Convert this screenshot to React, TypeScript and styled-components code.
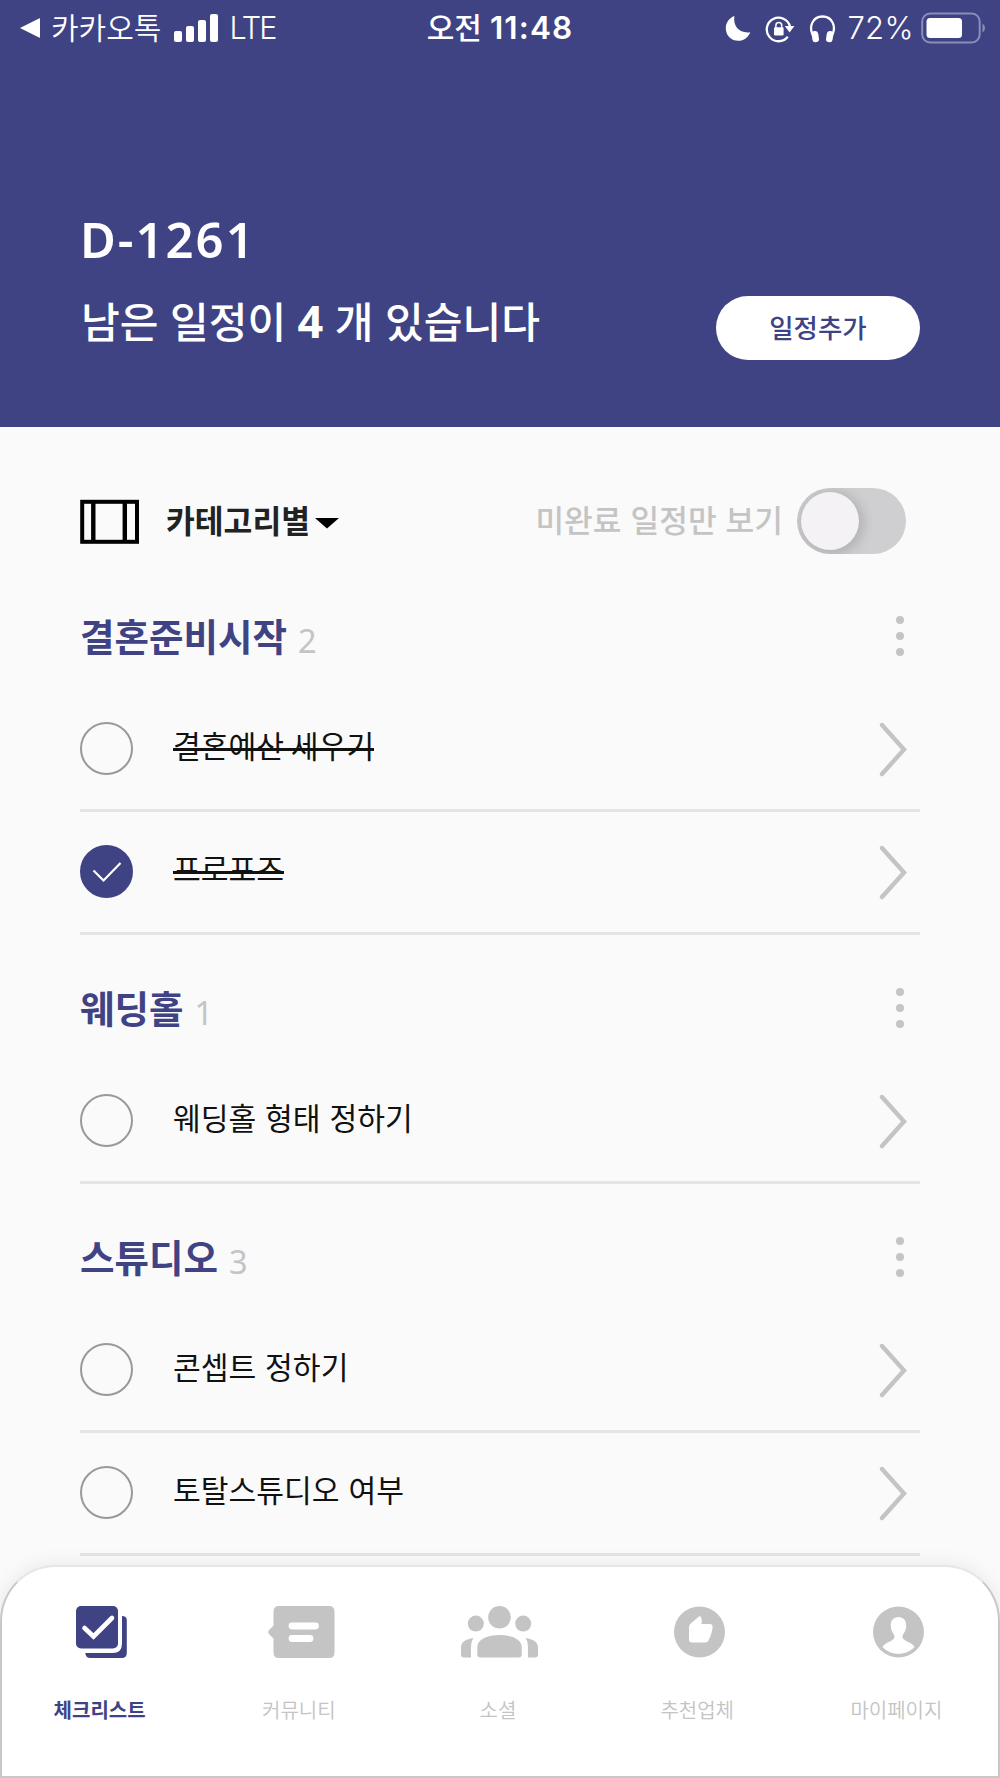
import React, { useState } from 'react';
import styled, { createGlobalStyle } from 'styled-components';

const navy = '#3f4384';
const grey = '#c4c4c4';

const GlobalStyle = createGlobalStyle`
  * { box-sizing: border-box; }
  body { margin: 0; background: #fafafa; }
  button { border: 0; padding: 0; background: none; font: inherit; color: inherit; cursor: pointer; }
  h1, h2, p { margin: 0; }
  svg { display: block; flex: none; }
`;

const Screen = styled.div`
  width: 1000px;
  height: 1778px;
  display: flex;
  flex-direction: column;
  overflow: hidden;
  background: #fafafa;
  color: #111;
  font-family: 'Noto Sans CJK KR', sans-serif;
`;

const Header = styled.header`
  height: 427px;
  flex: none;
  background: ${navy};
  color: #fff;
`;

const StatusBar = styled.div`
  height: 54px;
  padding: 0 14px 0 19px;
  display: grid;
  grid-template-columns: 1fr auto 1fr;
  align-items: center;
`;

const StatusGroup = styled.div<{ $end?: boolean }>`
  display: flex;
  align-items: center;
  justify-content: ${p => (p.$end ? 'flex-end' : 'flex-start')};
`;

const StatusIcons = styled.div`
  display: flex;
  align-items: center;
  gap: 14px;
  margin: 1px 11px 0 0;
`;

const Carrier = styled.span`
  margin: 0 13px 3px 10px;
  font-size: 30px;
  line-height: 51px;
  font-weight: 350;
`;

const Network = styled.span`
  margin-left: 10px;
  font-family: Inter, sans-serif;
  font-size: 30.5px;
  font-weight: 300;
  line-height: 54px;
  letter-spacing: -1.9px;
`;

const BatteryLevel = styled.span`
  margin-right: 7px;
  font-family: Inter, sans-serif;
  font-size: 31px;
  font-weight: 300;
  line-height: 54px;
  letter-spacing: 0.4px;
`;

const Clock = styled.span`
  display: flex;
  align-items: center;
  gap: 8px;
  font-size: 30px;
  font-weight: 500;
  line-height: 51px;
  padding: 0 5px 3px 0;
  b {
    padding-top: 2px;
    font-family: Inter, sans-serif;
    font-weight: 600;
    font-size: 31.5px;
    letter-spacing: 1.1px;
  }
`;

const Summary = styled.div`
  padding: 148px 80px 0 81px;
  display: flex;
  justify-content: space-between;
`;

const DDay = styled.h1`
  margin-left: -1px;
  padding-top: 2px;
  font-family: 'Noto Sans', sans-serif;
  font-size: 49px;
  font-weight: 600;
  line-height: 70px;
  letter-spacing: 2px;
`;

const Remaining = styled.p`
  margin-top: 14px;
  font-size: 42.1px;
  font-weight: 500;
  line-height: 64px;
  word-spacing: 2px;
  b {
    font-family: 'Noto Sans', sans-serif;
    font-size: 45px;
    font-weight: 700;
    line-height: 1;
  }
`;

const AddButton = styled.button`
  margin-top: 94px;
  width: 204px;
  height: 64px;
  padding-bottom: 2px;
  border-radius: 32px;
  background: #fff;
  color: ${navy};
  font-size: 26.5px;
  font-weight: 500;
  line-height: 62px;
`;

const List = styled.main`
  flex: 1;
  min-height: 0;
  padding: 0 80px;
`;

const Toolbar = styled.div`
  height: 136px;
  padding: 53px 14px 1px 0;
  display: flex;
  align-items: center;
`;

const SortButton = styled.button`
  margin-left: 26px;
  display: flex;
  align-items: center;
  gap: 5px;
  font-size: 31.3px;
  font-weight: 700;
  line-height: 42px;
  color: #222;
  span { padding-bottom: 2px; }
  svg { margin-top: 3px; }
`;

const FilterLabel = styled.span`
  margin: 0 14px 4px auto;
  font-size: 31.2px;
  font-weight: 500;
  line-height: 44px;
  color: ${grey};
  word-spacing: 2px;
`;

const Switch = styled.button<{ $on: boolean }>`
  width: 109px;
  height: 66px;
  padding: 4px;
  display: flex;
  align-items: center;
  justify-content: ${p => (p.$on ? 'flex-end' : 'flex-start')};
  border-radius: 33px;
  overflow: hidden;
  background: ${p => (p.$on ? navy : '#cfcfd2')};
`;

const Knob = styled.span`
  width: 58px;
  height: 58px;
  border-radius: 50%;
  background: #f4f2f4;
  box-shadow: 2px 2px 12px 3px rgba(0, 0, 0, 0.14);
`;

const SectionHead = styled.div`
  height: 126px;
  padding: 20px 16px 0 0;
  display: flex;
  align-items: center;
`;

const SectionTitle = styled.h2`
  margin-bottom: 2px;
  font-size: 37.5px;
  font-weight: 700;
  line-height: 54px;
  color: ${navy};
`;

const Count = styled.span`
  margin: 10px 0 0 11px;
  flex: 1;
  font-family: 'Noto Sans', sans-serif;
  font-size: 32.5px;
  line-height: 48px;
  color: ${grey};
`;

const Kebab = styled.button`
  display: flex;
  flex-direction: column;
  gap: 8px;
  i { width: 8px; height: 8px; border-radius: 50%; background: ${grey}; }
`;

const TaskRow = styled.div`
  height: 123px;
  padding: 0 13px 1px 0;
  display: flex;
  align-items: center;
  border-bottom: 3px solid #e4e4e4;
`;

const Check = styled.button<{ $on: boolean }>`
  width: 53px;
  height: 53px;
  display: flex;
  align-items: center;
  justify-content: center;
  border-radius: 50%;
  border: 2px solid ${p => (p.$on ? navy : '#999')};
  background: ${p => (p.$on ? navy : 'transparent')};
`;

const TaskName = styled.span<{ $struck: boolean }>`
  position: relative;
  margin: 0 auto 7px 40px;
  font-size: 30.2px;
  line-height: 44px;
  word-spacing: ${p => (p.$struck ? '0' : '2px')};
  &::after {
    content: '';
    display: ${p => (p.$struck ? 'block' : 'none')};
    position: absolute;
    left: 0;
    right: 0;
    top: 25px;
    height: 3px;
    background: #111;
  }
`;

const TabBar = styled.nav`
  height: 213px;
  flex: none;
  display: grid;
  grid-template-columns: repeat(5, 1fr);
  border: 2px solid #c8c8c8;
  border-top-color: #e6e6e6;
  border-radius: 56px 56px 0 0;
  background: #fff;
  box-shadow: 0 0 20px rgba(0, 0, 0, 0.08);
`;

const Tab = styled.button<{ $active: boolean }>`
  display: flex;
  flex-direction: column;
  align-items: center;
  gap: 37px;
  padding-top: 39px;
  color: ${p => (p.$active ? navy : grey)};
  font-size: 20px;
  font-weight: ${p => (p.$active ? 700 : 350)};
  line-height: 30px;
  span { margin-right: 4px; }
`;

const MoonIcon = () => (
  <svg width="26" height="27" viewBox="0 0 26 27" fill="#fff">
    <path d="M9.4 1C7.8 11.8 14.8 18.6 25.2 17.2C23.2 22.5 18.8 25.8 13.4 25.8C6.2 25.8.8 20.4.8 13.2C.8 7.6 4.2 3 9.4 1Z" />
  </svg>
);

const RotationLockIcon = () => (
  <svg width="30" height="28" viewBox="0 0 30 28" fill="none" stroke="#fff">
    <path d="M25 11.500A11.800 11.800 0 1 0 22.800 21.800" strokeWidth="2.300" />
    <path d="M19.800 11H29.400L24.600 17.600Z" fill="#fff" stroke="none" />
    <rect x="9" y="12.200" width="9.600" height="8.200" rx="1.200" fill="#fff" stroke="none" />
    <path d="M10.900 13V10.500a2.900 2.900 0 0 1 5.800 0V13" strokeWidth="1.500" />
  </svg>
);

const HeadphonesIcon = () => (
  <svg width="27" height="28" viewBox="0 0 27 28">
    <path d="M4.200 21C-.8 12 3.500 1.500 13.500 1.500S27.800 12 22.800 21" fill="none" stroke="#fff" strokeWidth="2.300" />
    <rect x="3" y="16" width="6.600" height="11.200" rx="3" transform="rotate(-9 6.300 21.600)" fill="#fff" />
    <rect x="17.400" y="16" width="6.600" height="11.200" rx="3" transform="rotate(9 20.700 21.600)" fill="#fff" />
  </svg>
);

const BatteryIcon = () => (
  <svg width="65" height="32" viewBox="0 0 65 32">
    <rect x="1.200" y="1.500" width="57.500" height="29" rx="8" fill="none" stroke="#8b8eb8" strokeWidth="2" />
    <rect x="5.500" y="6" width="35.500" height="20" rx="3.500" fill="#fff" />
    <path d="M61.500 11.500Q64 13 64 16T61.500 20.500Z" fill="#8b8eb8" />
  </svg>
);

const ViewIcon = () => (
  <svg width="60" height="46" viewBox="0 0 60 46" fill="none" stroke="#000">
    <rect x="2.200" y="3.800" width="54.800" height="40" strokeWidth="4" />
    <path d="M13.300 3V44M44.800 3V44" strokeWidth="4.400" />
  </svg>
);

const Chevron = () => (
  <svg width="28" height="56" viewBox="0 0 28 56" fill="none" stroke={grey} strokeWidth="4.400" strokeLinecap="round">
    <path d="M3 4L25 28.500L3 53" />
  </svg>
);

const ChecklistIcon = () => (
  <svg width="52" height="52" viewBox="0 0 52 52">
    <rect x="0" y="0" width="42" height="42.500" rx="5" fill={navy} />
    <path d="M8.500 22L17.500 30.500L36 12" fill="none" stroke="#fff" strokeWidth="4.600" strokeLinecap="round" />
    <path d="M46 10C49 10 50.800 11.500 50.800 14V47Q50.800 52 45.800 52H14.500Q9.500 52 9.300 47H36.500Q46 47 46 37.500Z" fill={navy} />
  </svg>
);

const CommunityIcon = () => (
  <svg width="69" height="52" viewBox="-2 0 69 52">
    <path d="M11 0H61Q66.500 0 66.500 5.500V46.500Q66.500 52 61 52H11Q5.500 52 5.500 46.500V32.500L1 28Q-.8 26 1 24L5.500 19.500V5.500Q5.500 0 11 0Z" fill={grey} />
    <path d="M24 20H47.500M24 32.500H42" stroke="#fff" strokeWidth="6.800" strokeLinecap="round" />
  </svg>
);

const SocialIcon = () => (
  <svg width="77" height="52" viewBox="0 0 77 52" fill={grey}>
    <circle cx="38.500" cy="11.300" r="11.300" />
    <circle cx="14.800" cy="17.600" r="8" />
    <circle cx="62.200" cy="17.600" r="8" />
    <path d="M16.300 41C16.300 33 27 29 38.500 29S60.700 33 60.700 41V48.500Q60.700 51.500 57.700 51.500H19.300Q16.300 51.500 16.300 48.500Z" />
    <path d="M12.500 32C9.800 36 10 38.500 10 51.500H3Q0 51.500 0 48.500V41.500C0 36 5 33 12.500 32Z" />
    <path d="M64.500 32C67.200 36 67 38.500 67 51.500H74Q77 51.500 77 48.500V41.500C77 36 72 33 64.500 32Z" />
  </svg>
);

const RecommendIcon = () => (
  <svg width="51" height="52" viewBox="0 0 51 52">
    <circle cx="25.500" cy="26" r="25.500" fill={grey} />
    <path d="M25.500 10Q28.700 11.300 27.500 18H36Q39 18 38.500 22Q38 27.500 34.500 34.500Q33.600 36.500 31.500 36.500H18Q15 36.500 15 33.500V21Q15 19 16.500 17.700Z" fill="#fff" />
  </svg>
);

const ProfileIcon = () => (
  <svg width="51" height="52" viewBox="0 0 51 52">
    <circle cx="25.500" cy="26" r="25.500" fill={grey} />
    <path d="M25.500 11C30.500 11 33.500 14.500 33.200 20C33 24.500 31.500 26.200 30.200 28.300C28.500 31.500 30 33.500 33.500 35.200C37.500 36.800 40.200 38.500 41.500 41C37.500 45.300 32 47.800 25.500 47.800S13.500 45.300 9.500 41C10.800 38.500 13.500 36.800 17.500 35.200C21 33.500 22.500 31.500 20.800 28.300C19.500 26.200 18 24.500 17.800 20C17.500 14.500 20.500 11 25.500 11Z" fill="#fff" />
  </svg>
);

type Task = { name: string; struck?: boolean; checked?: boolean };

const sections: { title: string; count: number; tasks: Task[] }[] = [
  { title: '결혼준비시작', count: 2, tasks: [{ name: '결혼예산 세우기', struck: true }, { name: '프로포즈', struck: true, checked: true }] },
  { title: '웨딩홀', count: 1, tasks: [{ name: '웨딩홀 형태 정하기' }] },
  { title: '스튜디오', count: 3, tasks: [{ name: '콘셉트 정하기' }, { name: '토탈스튜디오 여부' }] },
];

const tabs = [
  { label: '체크리스트', Icon: ChecklistIcon },
  { label: '커뮤니티', Icon: CommunityIcon },
  { label: '소셜', Icon: SocialIcon },
  { label: '추천업체', Icon: RecommendIcon },
  { label: '마이페이지', Icon: ProfileIcon },
];

const TaskItem = ({ task }: { task: Task }) => {
  const [checked, setChecked] = useState(!!task.checked);
  return (
    <TaskRow>
      <Check $on={checked} onClick={() => setChecked(!checked)}>
        {checked && (
          <svg width="30" height="22" viewBox="0 0 30 22" fill="none" stroke="#fff" strokeWidth="2.200">
            <path d="M1.500 9.500L11.500 19.500L28.500 2" />
          </svg>
        )}
      </Check>
      <TaskName $struck={!!task.struck}>{task.name}</TaskName>
      <Chevron />
    </TaskRow>
  );
};

export default function App() {
  const [onlyOpen, setOnlyOpen] = useState(false);
  const [tab, setTab] = useState(0);
  return (
    <Screen>
      <GlobalStyle />
      <Header>
        <StatusBar>
          <StatusGroup>
            <svg width="22" height="22" viewBox="0 0 22 22" fill="#fff"><path d="M1 11L20 1.500Q21 1 21 2V20Q21 21 20 20.500Z" /></svg>
            <Carrier>카카오톡</Carrier>
            <svg width="45" height="30" viewBox="0 0 45 30" fill="#fff">
              <rect x="0" y="18" width="8" height="11" rx="2" />
              <rect x="12" y="13" width="8" height="16" rx="2" />
              <rect x="24" y="7" width="8" height="22" rx="2" />
              <rect x="36" y="1" width="8" height="28" rx="2" />
            </svg>
            <Network>LTE</Network>
          </StatusGroup>
          <Clock>오전 <b>11:48</b></Clock>
          <StatusGroup $end>
            <StatusIcons>
              <MoonIcon />
              <RotationLockIcon />
              <HeadphonesIcon />
            </StatusIcons>
            <BatteryLevel>72%</BatteryLevel>
            <BatteryIcon />
          </StatusGroup>
        </StatusBar>
        <Summary>
          <div>
            <DDay>D-1261</DDay>
            <Remaining>남은 일정이 <b>4</b> 개 있습니다</Remaining>
          </div>
          <AddButton>일정추가</AddButton>
        </Summary>
      </Header>
      <List>
        <Toolbar>
          <ViewIcon />
          <SortButton>
            <span>카테고리별</span>
            <svg width="24" height="12" viewBox="0 0 24 12"><path d="M0 1H24L12 11.500Z" fill="#000" /></svg>
          </SortButton>
          <FilterLabel>미완료 일정만 보기</FilterLabel>
          <Switch $on={onlyOpen} onClick={() => setOnlyOpen(!onlyOpen)}><Knob /></Switch>
        </Toolbar>
        {sections.map(s => (
          <section key={s.title}>
            <SectionHead>
              <SectionTitle>{s.title}</SectionTitle>
              <Count>{s.count}</Count>
              <Kebab><i /><i /><i /></Kebab>
            </SectionHead>
            {s.tasks.map(t => <TaskItem key={t.name} task={t} />)}
          </section>
        ))}
      </List>
      <TabBar>
        {tabs.map(({ label, Icon }, i) => (
          <Tab key={label} $active={i === tab} onClick={() => setTab(i)}>
            <Icon />
            <span>{label}</span>
          </Tab>
        ))}
      </TabBar>
    </Screen>
  );
}
